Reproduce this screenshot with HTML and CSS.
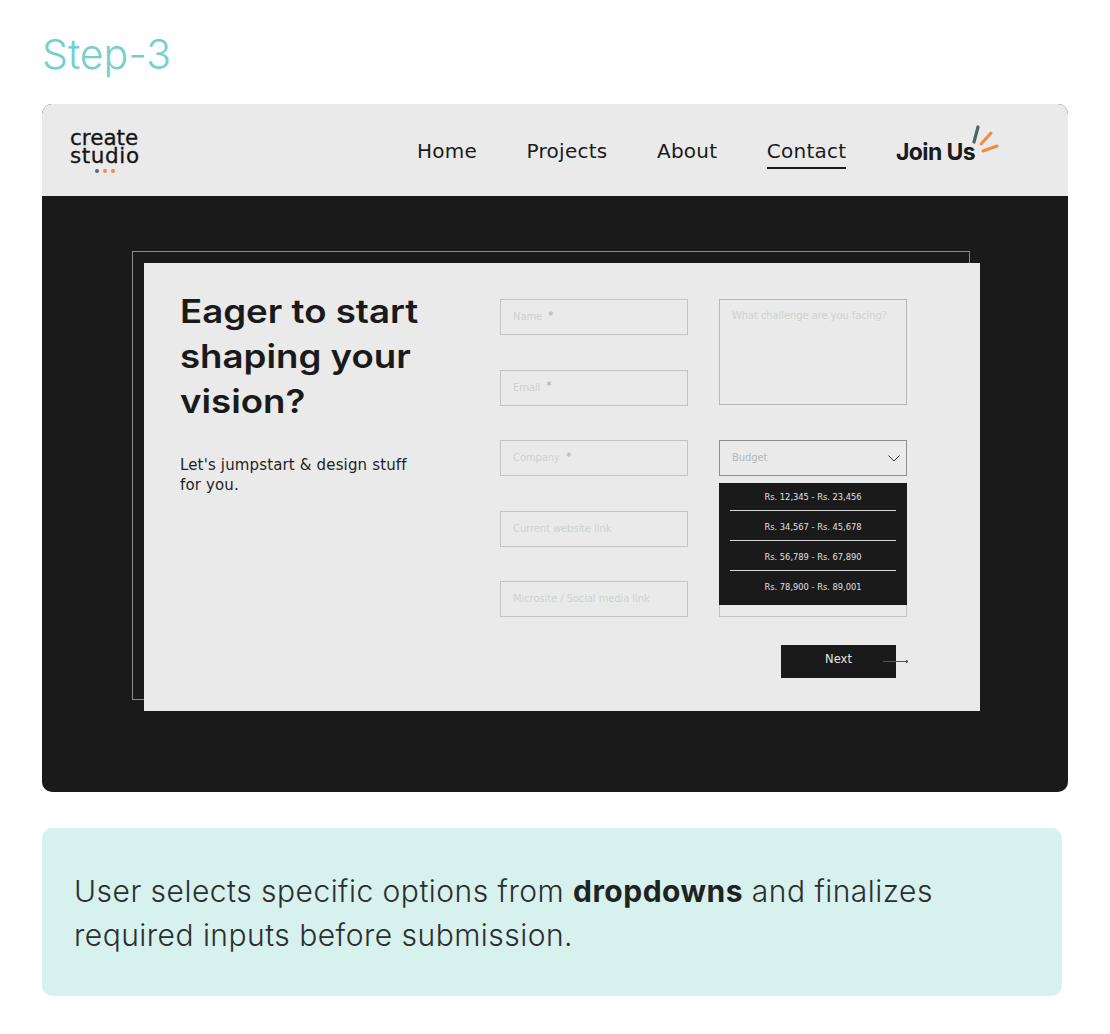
FILE: index.html
```html
<!DOCTYPE html>
<html lang="en">
<head>
<meta charset="utf-8">
<title>Step-3</title>
<link rel="stylesheet" href="styles.css">
</head>
<body>
<main class="page">
  <h1 class="step">Step-3</h1>
  <section class="shot">
    <header class="topbar">
      <div class="logo">
        <span class="logo-word">create</span>
        <span class="logo-word logo-word-wide">studio</span>
        <span class="logo-dots"><i class="dot dot-slate"></i><i class="dot dot-orange"></i><i class="dot dot-orange"></i></span>
      </div>
      <nav class="nav">
        <a class="nav-link">Home</a>
        <a class="nav-link">Projects</a>
        <a class="nav-link">About</a>
        <a class="nav-link nav-active">Contact</a>
        <a class="join">Join Us
          <svg class="sparks" width="32" height="34" viewBox="0 0 32 34" aria-hidden="true">
            <path d="M8 3 4 18" stroke="#4f6466" stroke-width="3.200" stroke-linecap="round" fill="none"/>
            <path d="M21 9 11 20" stroke="#f28a3c" stroke-width="3" stroke-linecap="round" fill="none"/>
            <path d="M27 22 13 27" stroke="#f28a3c" stroke-width="3" stroke-linecap="round" fill="none"/>
          </svg>
        </a>
      </nav>
    </header>
    <div class="stage">
      <div class="panel">
        <div class="intro">
          <h2 class="headline">Eager to start shaping your vision?</h2>
          <p class="lede">Let's jumpstart &amp; design stuff for you.</p>
        </div>
        <form class="form">
          <div class="field"><span class="ph">Name</span><span class="req">*</span></div>
          <div class="field field-area"><span class="ph">What challenge are you facing?</span></div>
          <div class="field"><span class="ph">Email</span><span class="req">*</span></div>
          <div class="field"><span class="ph">Company</span><span class="req">*</span></div>
          <div class="field field-select">
            <span class="ph ph-select">Budget</span>
            <svg class="chev" width="12" height="7" viewBox="0 0 12 7" aria-hidden="true"><path d="M.5.500 6 6l5.500-5.500" fill="none" stroke="#333" stroke-width="1"/></svg>
            <ul class="menu">
              <li class="menu-item">Rs. 12,345 - Rs. 23,456</li>
              <li class="menu-item">Rs. 34,567 - Rs. 45,678</li>
              <li class="menu-item">Rs. 56,789 - Rs. 67,890</li>
              <li class="menu-item">Rs. 78,900 - Rs. 89,001</li>
            </ul>
          </div>
          <div class="field"><span class="ph">Current website link</span></div>
          <div class="field field-tall"></div>
          <div class="field"><span class="ph">Microsite / Social media link</span></div>
          <div class="actions">
            <button class="next" type="button">Next
              <svg class="arrow" width="26" height="5" viewBox="0 0 26 5" aria-hidden="true"><path d="M0 2.500h25M23 1l2 1.500L23 4" fill="none" stroke="#555" stroke-width="1"/></svg>
            </button>
          </div>
        </form>
      </div>
    </div>
  </section>
  <section class="note">
    <p class="note-text">User selects specific options from <strong>dropdowns</strong> and finalizes required inputs before submission.</p>
  </section>
</main>
</body>
</html>
```
FILE: styles.css
```css
* { box-sizing: border-box; }
html, body { margin: 0; padding: 0; }
body { background: #fff; font-family: "DejaVu Sans", "Liberation Sans", sans-serif; color: #1a1a1a; }
.page { width: 1110px; height: 1034px; padding: 27px 42px 0; overflow: hidden; }
.step { margin: 0 0 23px; height: 54px; font-family: "Inter", sans-serif; font-size: 41px; line-height: 54px; font-weight: 300; color: #74cfcd; }
.shot { width: 1026px; height: 688px; border-radius: 10px; overflow: hidden; background: #1a1a1a; }
.topbar { height: 92px; background: #eaeaea; display: flex; padding: 0 0 0 28px; align-items: center; justify-content: space-between; }
.logo { display: flex; flex-direction: column; width: 72px; margin-top: 1px; }
.logo-word { font-size: 21.500px; line-height: 19px; letter-spacing: 0; color: #151515; -webkit-text-stroke: .3px #151515; white-space: nowrap; }
.logo-word-wide { letter-spacing: .6px; margin-top: -1px; }
.logo-dots { display: flex; justify-content: center; gap: 4px; margin-top: 4px; padding-right: 2px; }
.dot { width: 4px; height: 4px; border-radius: 50%; }
.dot-slate { background: #566a6c; }
.dot-orange { background: #f28a3c; }
.nav { display: flex; align-items: center; gap: 49.500px; margin-right: 93px; margin-top: 2px; }
.nav-link { position: relative; font-size: 20px; line-height: 24px; letter-spacing: .25px; color: #1a1a1a; white-space: nowrap; }
.nav-active::after { content: ""; position: absolute; left: 0; right: 0; bottom: -6px; height: 2px; background: #1a1a1a; }
.join { position: relative; font-family: "Inter", sans-serif; font-size: 23px; line-height: 24px; font-weight: 700; letter-spacing: -.6px; color: #1a1a1a; white-space: nowrap; margin-top: 2px; }
.sparks { position: absolute; left: 74px; top: -16px; }
.stage { padding: 67px 88px 0 102px; }
.panel { position: relative; width: 836px; height: 448px; background: #eaeaea; display: flex; padding: 27px 0 0 36px; }
.panel::before { content: ""; position: absolute; left: -12px; top: -12px; width: 836px; height: 447px; border: 1px solid #8d8d8d; z-index: 0; }
.panel::after { content: ""; position: absolute; inset: 0; background: #eaeaea; z-index: 0; }
.intro, .form { position: relative; z-index: 1; }
.intro { width: 320px; }
.headline { margin: -1px 0 0; width: 240px; font-family: "Inter", sans-serif; font-size: 33px; line-height: 45px; font-weight: 560; color: #1a1a1a; transform: scaleX(1.11); transform-origin: left top; }
.lede { margin: 31px 0 0; width: 240px; font-size: 15px; line-height: 20px; letter-spacing: .15px; color: #1f1f1f; }
.form { display: grid; grid-template-columns: 188px 188px; grid-template-rows: repeat(5, 35.500px) auto; row-gap: 35px; column-gap: 31px; align-self: flex-start; margin-top: 9px; }
.field { position: relative; border: 1px solid #bfc4c2; height: 36px; display: flex; align-items: center; padding: 0 12px; gap: 6px; }
.field-area { grid-row: span 2; height: auto; align-items: flex-start; padding-top: 9px; border-color: #b5b9b7; }
.field-select { border-color: #8f8f8f; justify-content: space-between; z-index: 2; }
.field-tall { grid-column: 2; grid-row: 4 / 6; height: auto; }
.ph { font-size: 10px; line-height: 14px; letter-spacing: -.1px; color: #cdd2d0; white-space: nowrap; }
.ph-select { color: #b4b8b6; }
.req { font-size: 11px; color: #a9adab; margin-top: -4px; }
.chev { flex: none; margin-right: -6px; }
.menu { position: absolute; left: -1px; right: -1px; top: 42px; height: 122px; margin: 0; padding: 0 11px; list-style: none; background: #1a1a1a; z-index: 3; }
.menu-item { height: 30px; padding-top: 10px; line-height: 12px; text-align: center; font-size: 8.300px; color: #e0e0e0; white-space: nowrap; border-bottom: 1px solid #d8d8d8; }
.menu-item:first-child { height: 28px; padding-top: 8px; }
.menu-item:last-child { border-bottom: 0; }
.actions { grid-column: 1 / 3; grid-row: 6; display: flex; justify-content: flex-end; padding-right: 11px; margin-top: -7px; }
.next { position: relative; width: 115px; height: 33px; border: 0; background: #1a1a1a; color: #e6e6e6; font-family: inherit; font-size: 11.500px; padding: 0 0 4px; }
.arrow { position: absolute; left: 102px; top: 14px; }
.note { width: 1020px; height: 168px; margin-top: 36px; border-radius: 10px; background: #d7f1ee; padding: 41px 32px 0; }
.note-text { margin: 0; max-width: 880px; font-family: "Inter", sans-serif; font-size: 30px; line-height: 44px; font-weight: 300; letter-spacing: .48px; color: #2b2f2f; }
.note-text strong { font-weight: 700; color: #1f2323; }
```
